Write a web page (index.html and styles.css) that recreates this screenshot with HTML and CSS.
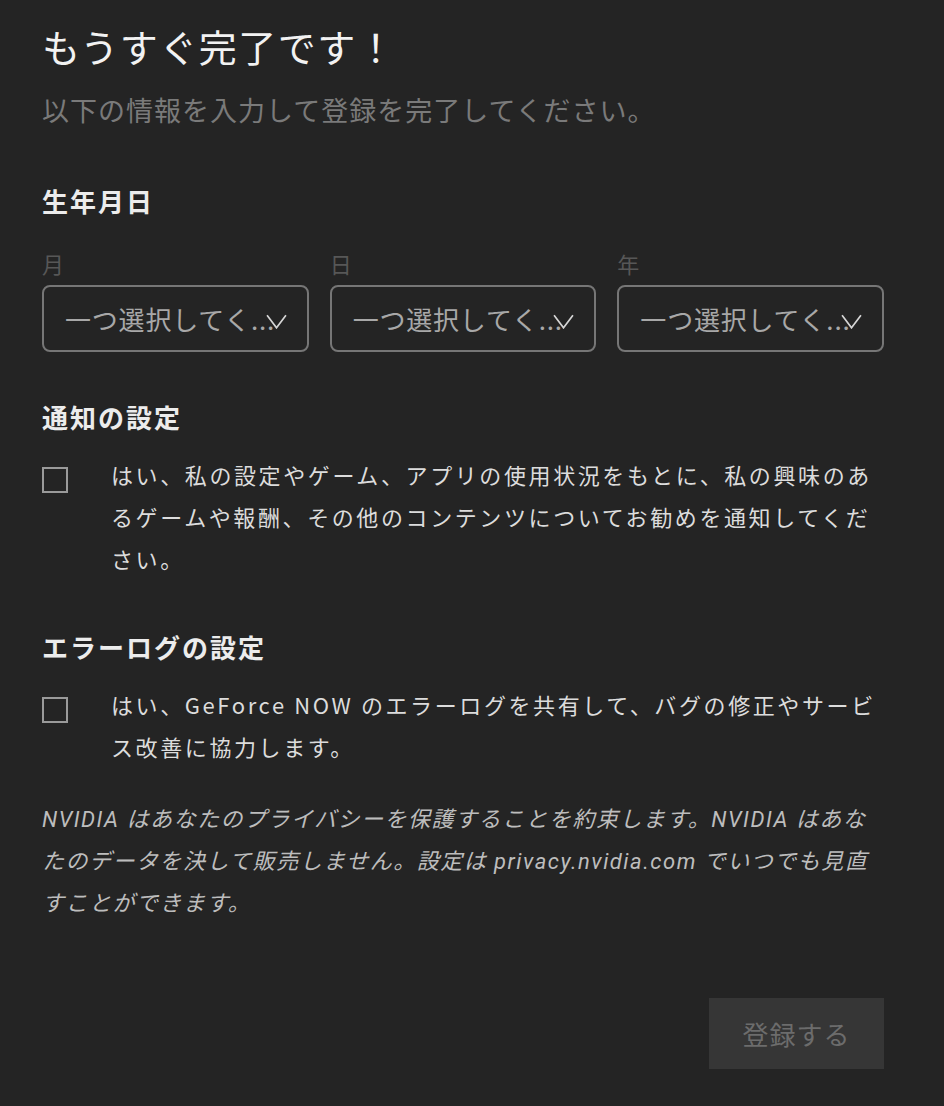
FILE: index.html
```html
<!DOCTYPE html>
<html lang="ja">
<head>
	<meta charset="utf-8">
	<title>登録</title>
	<link rel="stylesheet" href="styles.css">
</head>
<body>
	<div class="signup">
		<h1 class="title">もうすぐ完了です！</h1>
		<p class="lead">以下の情報を入力して登録を完了してください。</p>

		<h2 class="heading birth">生年月日</h2>
		<div class="dob">
			<div class="field">
				<label class="field-label">月</label>
				<div class="select">
					<span class="select-text">一つ選択してく...</span>
					<svg class="chevron" viewBox="0 0 20 14"><path d="M1 1 L10 13 L19 1" /></svg>
				</div>
			</div>
			<div class="field">
				<label class="field-label">日</label>
				<div class="select">
					<span class="select-text">一つ選択してく...</span>
					<svg class="chevron" viewBox="0 0 20 14"><path d="M1 1 L10 13 L19 1" /></svg>
				</div>
			</div>
			<div class="field">
				<label class="field-label">年</label>
				<div class="select">
					<span class="select-text">一つ選択してく...</span>
					<svg class="chevron" viewBox="0 0 20 14"><path d="M1 1 L10 13 L19 1" /></svg>
				</div>
			</div>
		</div>

		<h2 class="heading notify">通知の設定</h2>
		<div class="option">
			<span class="checkbox"></span>
			<p class="option-text">はい、私の設定やゲーム、アプリの使用状況をもとに、私の興味のあるゲームや報酬、その他のコンテンツについてお勧めを通知してください。</p>
		</div>

		<h2 class="heading errlog">エラーログの設定</h2>
		<div class="option">
			<span class="checkbox"></span>
			<p class="option-text">はい、GeForce NOW のエラーログを共有して、バグの修正やサービス改善に協力します。</p>
		</div>

		<p class="privacy">NVIDIA はあなたのプライバシーを保護することを約束します。NVIDIA はあなたのデータを決して販売しません。設定は privacy.nvidia.com でいつでも見直すことができます。</p>

		<div class="actions">
			<button class="submit" disabled>登録する</button>
		</div>
	</div>
</body>
</html>
```

FILE: styles.css
```css
body {
  margin: 0;
  background-color: #242424;
  font-family: "Noto Sans CJK JP", "Noto Sans", sans-serif;
  color: #e6e6e6;
}

.signup {
  padding: 22px 60px 40px 42px;
}

.title {
  margin: 0;
  font-size: 38px;
  font-weight: 400;
  line-height: 48px;
  letter-spacing: 1.5px;
  color: #f2f2f2;
}

.lead {
  margin: 20px 0 0;
  font-size: 27px;
  line-height: 40px;
  letter-spacing: 1px;
  color: #7a7a7a;
}

.heading {
  margin: 0;
  font-size: 26px;
  font-weight: 700;
  line-height: 36px;
  letter-spacing: 2px;
  color: #ececec;
}

.birth {
  margin-top: 53px;
}

.notify {
  margin-top: 47px;
}

.errlog {
  margin-top: 50px;
}

/* date of birth selects */
.dob {
  display: grid;
  grid-template-columns: repeat(3, minmax(0, 1fr));
  gap: 21px;
  margin-top: 31px;
}

.field {
  min-width: 0;
}

.field-label {
  display: block;
  font-size: 22px;
  line-height: 26px;
  color: #575757;
}

.select {
  position: relative;
  margin-top: 9px;
  height: 67px;
  box-sizing: border-box;
  border: 2px solid #767676;
  border-radius: 8px;
  padding: 0 20px 0 21px;
  display: flex;
  align-items: center;
}

.select-text {
  font-size: 26px;
  letter-spacing: 0.8px;
  color: #a8a8a8;
  white-space: nowrap;
}

.chevron {
  position: absolute;
  right: 20px;
  top: 27px;
  width: 21px;
  height: 15px;
  fill: none;
  stroke: #d6d6d6;
  stroke-width: 1.6;
}

/* checkbox rows */
.option {
  display: flex;
  align-items: flex-start;
  gap: 43px;
  margin-top: 18px;
}

.checkbox {
  flex: none;
  width: 26px;
  height: 26px;
  box-sizing: border-box;
  margin-top: 14px;
  border: 2px solid #9a9a9a;
}

.option-text {
  margin: 0;
  font-size: 22px;
  line-height: 42px;
  letter-spacing: 2.6px;
  color: #dcdcdc;
}

.privacy {
  margin: 32px 0 0;
  font-family: Roboto, "Noto Sans CJK JP", sans-serif;
  font-size: 22px;
  font-style: italic;
  line-height: 42px;
  letter-spacing: 1.5px;
  color: #bdbdbd;
}

.actions {
  display: flex;
  justify-content: flex-end;
  margin-top: 73px;
}

.submit {
  width: 175px;
  height: 71px;
  border: none;
  background-color: #363636;
  font-family: inherit;
  font-size: 26px;
  letter-spacing: 1px;
  color: #6c6c6c;
}
```
